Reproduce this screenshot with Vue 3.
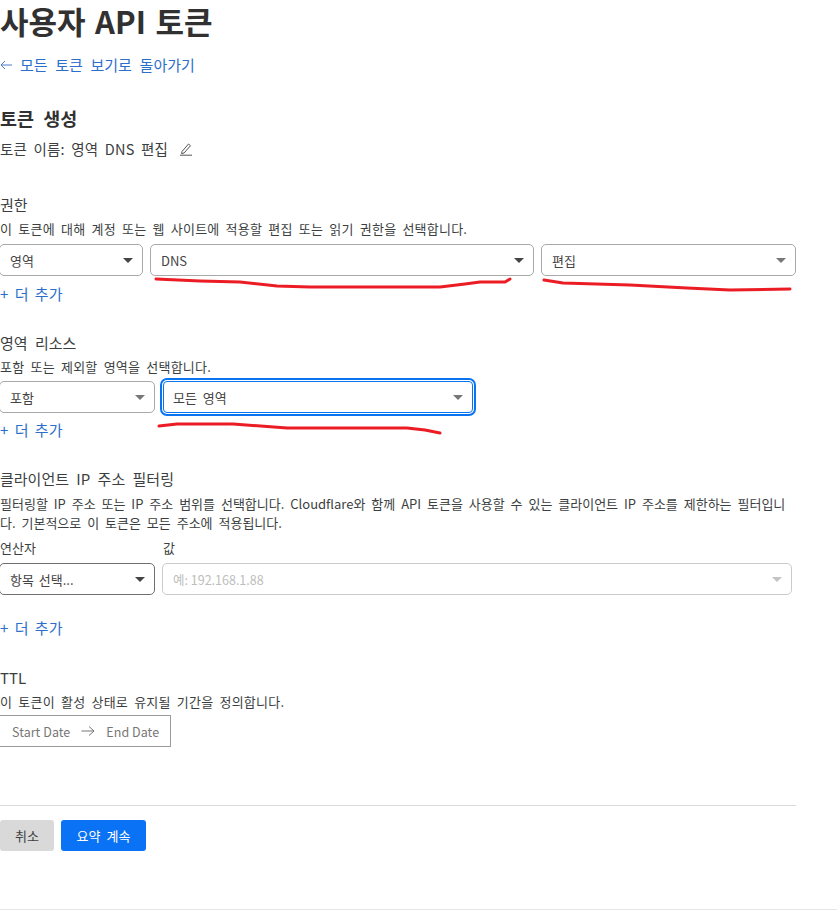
<template>
  <div class="page">
    <h1 class="title">사용자 API 토큰</h1>
    <a class="back-link">
      <svg class="back-arrow" width="12" height="10" viewBox="0 0 12 10" fill="none" stroke="#4a7fd0" stroke-width="1">
        <path d="M12 5H1M5 1 1 5l4 4" />
      </svg>
      모든 토큰 보기로 돌아가기
    </a>

    <h2 class="sub-title">토큰 생성</h2>
    <div class="token-name">
      토큰 이름: 영역 DNS 편집
      <svg class="pencil" width="14" height="14" viewBox="0 0 14 14" fill="none" stroke="#555" stroke-width="1">
        <path d="M3 9.500 9.500 2l2 1.700L5 11l-2.400.6z" />
        <path d="M1 13.200h12" />
      </svg>
    </div>

    <!-- 권한 -->
    <section class="permissions">
      <div class="section-title">권한</div>
      <p class="section-desc">이 토큰에 대해 계정 또는 웹 사이트에 적용할 편집 또는 읽기 권한을 선택합니다.</p>
      <div class="select-row row-one">
        <div class="select w-zone"><span>영역</span><i class="caret dark"></i></div>
        <div class="select w-dns"><span>DNS</span><i class="caret dark"></i></div>
        <div class="select w-edit"><span>편집</span><i class="caret"></i></div>
      </div>
      <a class="add-more">+ 더 추가</a>
    </section>

    <!-- 영역 리소스 -->
    <section class="resources">
      <div class="section-title">영역 리소스</div>
      <p class="section-desc">포함 또는 제외할 영역을 선택합니다.</p>
      <div class="select-row row-two">
        <div class="select w-include"><span>포함</span><i class="caret"></i></div>
        <div class="focus-ring">
          <div class="select focused"><span>모든 영역</span><i class="caret"></i></div>
        </div>
      </div>
      <a class="add-more">+ 더 추가</a>
    </section>

    <!-- 클라이언트 IP 주소 필터링 -->
    <section class="ip-filter">
      <div class="section-title">클라이언트 IP 주소 필터링</div>
      <p class="section-desc wrap">필터링할 IP 주소 또는 IP 주소 범위를 선택합니다. Cloudflare와 함께 API 토큰을 사용할 수 있는 클라이언트 IP 주소를 제한하는 필터입니다. 기본적으로 이 토큰은 모든 주소에 적용됩니다.</p>
      <div class="field-row">
        <div class="field">
          <label>연산자</label>
          <div class="select w-include strong"><span>항목 선택...</span><i class="caret dark"></i></div>
        </div>
        <div class="field grow">
          <label>값</label>
          <div class="select disabled"><span>예: 192.168.1.88</span><i class="caret light"></i></div>
        </div>
      </div>
      <a class="add-more more-low">+ 더 추가</a>
    </section>

    <!-- TTL -->
    <section class="ttl">
      <div class="section-title">TTL</div>
      <p class="section-desc">이 토큰이 활성 상태로 유지될 기간을 정의합니다.</p>
      <div class="date-range">
        <span>Start Date</span>
        <svg width="14" height="12" viewBox="0 0 14 12" fill="none" stroke="#777" stroke-width="1">
          <path d="M.5 6h12.500M8 1.500 13 6l-5 4.500" />
        </svg>
        <span>End Date</span>
      </div>
    </section>

    <div class="actions">
      <button class="btn cancel">취소</button>
      <button class="btn primary">요약 계속</button>
    </div>

    <div class="bottom-line"></div>

    <!-- 빨간 밑줄 표시 -->
    <svg class="marks" width="837" height="910" viewBox="0 0 837 910" fill="none" stroke="#ec1c24" stroke-width="3" stroke-linecap="round" stroke-linejoin="round">
      <path d="M156 279 200 281 240 282 277 286 310 287 420 287 440 287 465 284 480 282 505 282 510 279" />
      <path d="M544 280 563 283 630 285 687 288 730 290 790 289" />
      <path d="M159 426 177 424 233 424 287 428 407 428 425 430 440 433" />
    </svg>
  </div>
</template>

<script setup>
</script>

<style>
html,
body {
  margin: 0;
  background: #fff;
}
</style>

<style scoped>
.page {
  position: relative;
  width: 837px;
  height: 910px;
  overflow: hidden;
  box-sizing: border-box;
  font-family: "Noto Sans CJK KR", "Open Sans", sans-serif;
  color: #3c3f41;
  font-size: 13px;
}

.title {
  margin: 0;
  height: 45px;
  font-size: 31px;
  line-height: 41px;
  font-weight: 700;
  word-spacing: 2.500px;
  color: #313131;
}

.back-link {
  display: flex;
  align-items: center;
  gap: 8px;
  margin-top: 9px;
  height: 22px;
  line-height: 22px;
  font-size: 15px;
  word-spacing: 4.300px;
  color: #2c6ecb;
}

.sub-title {
  margin: 30px 0 0;
  height: 24px;
  font-size: 18.500px;
  line-height: 24px;
  font-weight: 700;
  word-spacing: 5px;
  color: #313131;
}

.token-name {
  display: flex;
  align-items: center;
  gap: 11px;
  margin-top: 8px;
  height: 22px;
  line-height: 22px;
  font-size: 14.500px;
  word-spacing: 3px;
  letter-spacing: 0.200px;
}

.permissions {
  margin-top: 34px;
}

.resources,
.ip-filter {
  margin-top: 26px;
}

.ttl {
  margin-top: 27px;
}

.section-title {
  height: 22px;
  line-height: 22px;
  font-size: 15px;
  word-spacing: 4px;
}

.section-desc {
  margin: 3px 0 0;
  height: 20px;
  line-height: 20px;
  font-size: 13px;
  word-spacing: 3px;
  letter-spacing: 0.220px;
  white-space: nowrap;
}

.section-desc.wrap {
  margin-top: 4px;
  height: 39px;
  line-height: 19px;
  width: 796px;
  letter-spacing: 0;
  white-space: normal;
  word-break: break-all;
}

.select-row {
  display: flex;
  width: 797px;
  margin-left: -1px;
}

.row-one {
  gap: 7px;
  margin-top: 5px;
}

.row-two {
  gap: 5px;
  align-items: center;
  margin-top: 4px;
}

.select {
  position: relative;
  display: flex;
  align-items: center;
  box-sizing: border-box;
  height: 32px;
  padding-left: 10px;
  background: #fff;
  border: 1px solid #a9a9a9;
  border-radius: 5px;
  font-size: 13px;
  word-spacing: 3px;
  color: #444;
}

.w-zone {
  width: 144px;
}

.w-dns {
  width: 384px;
}

.w-edit {
  width: 255px;
}

.w-include {
  width: 156px;
}

.strong {
  border-color: #6f6f6f;
  word-spacing: 2px;
}

.caret {
  position: absolute;
  right: 9px;
  top: 13px;
  width: 0;
  height: 0;
  border-left: 5px solid transparent;
  border-right: 5px solid transparent;
  border-top: 5px solid #777;
}

.caret.dark {
  border-top-color: #444;
}

.caret.light {
  border-top-color: #c4c4c4;
}

.focus-ring {
  box-sizing: border-box;
  width: 316px;
  height: 38px;
  margin: -3px 0;
  padding: 1px;
  border: 2px solid #0a74f0;
  border-radius: 7px;
}

.focused {
  height: 32px;
  border: 1px solid #0a74f0;
  border-radius: 4px;
  padding-left: 9px;
}

.add-more {
  display: block;
  height: 24px;
  line-height: 24px;
  margin-top: 6px;
  font-size: 15px;
  word-spacing: 3px;
  color: #2c6ecb;
}

.resources .add-more {
  margin-top: 5px;
}

.ip-filter .more-low {
  margin-top: 21px;
}

.field-row {
  display: flex;
  gap: 7px;
  width: 793px;
  margin: 5px 0 0 -1px;
}

.field label {
  display: block;
  height: 20px;
  margin-bottom: 5px;
  margin-left: 1px;
  line-height: 20px;
  font-size: 13px;
}

.field.grow {
  flex: 1;
}

.disabled {
  border-color: #cbcbcb;
  color: #bdbdbd;
  font-size: 12.500px;
  word-spacing: 0;
}

.date-range {
  display: flex;
  align-items: center;
  gap: 11px;
  box-sizing: border-box;
  width: 172px;
  height: 32px;
  margin: 3px 0 0 -1px;
  padding-left: 12px;
  border: 1px solid #9a9a9a;
  font-size: 12.500px;
  letter-spacing: 0.050px;
  color: #777;
}

.actions {
  display: flex;
  gap: 7px;
  width: 796px;
  margin-top: 58px;
  padding-top: 14px;
  border-top: 1px solid #d9d9d9;
}

.btn {
  height: 31px;
  border: none;
  border-radius: 3px;
  font-family: inherit;
  font-size: 13px;
  word-spacing: 3px;
  padding: 0;
}

.cancel {
  width: 54px;
  background: #d9d9d9;
  color: #3c3f41;
}

.primary {
  width: 85px;
  background: #0a72f5;
  color: #fff;
}

.bottom-line {
  position: absolute;
  left: 0;
  right: 0;
  bottom: 0;
  height: 1px;
  background: #e6e6e6;
}

.marks {
  position: absolute;
  left: 0;
  top: 0;
  pointer-events: none;
}
</style>
